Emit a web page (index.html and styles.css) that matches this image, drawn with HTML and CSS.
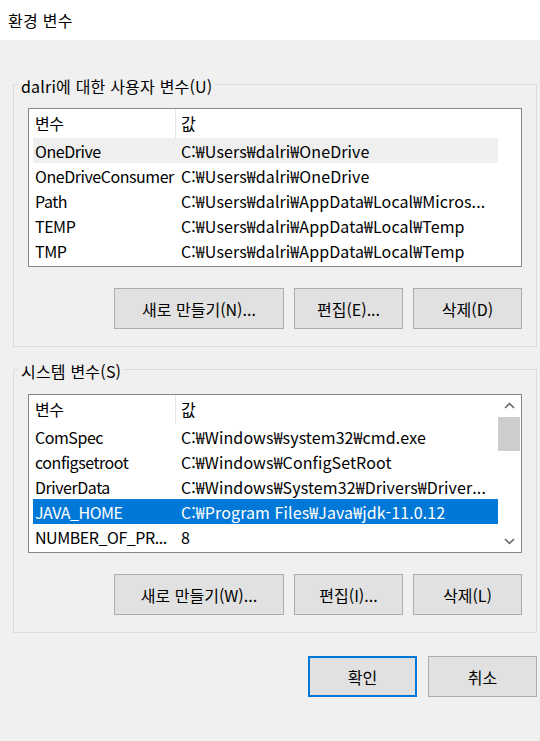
FILE: index.html
```html
<!DOCTYPE html>
<html lang="ko">
<head>
<meta charset="utf-8">
<title>환경 변수</title>
<link rel="stylesheet" href="styles.css">
</head>
<body>
<div class="window">
  <div class="titlebar">환경 변수</div>
  <div class="content">
    <fieldset class="group group-user">
      <legend>dalri에 대한 사용자 변수(U)</legend>
      <div class="group-body">
        <div class="list">
          <div class="list-main">
            <div class="row head"><span class="c1">변수</span><span class="c2">값</span></div>
            <div class="row hover"><span class="c1">OneDrive</span><span class="c2">C:₩Users₩dalri₩OneDrive</span></div>
            <div class="row"><span class="c1">OneDriveConsumer</span><span class="c2">C:₩Users₩dalri₩OneDrive</span></div>
            <div class="row"><span class="c1">Path</span><span class="c2">C:₩Users₩dalri₩AppData₩Local₩Micros...</span></div>
            <div class="row"><span class="c1">TEMP</span><span class="c2">C:₩Users₩dalri₩AppData₩Local₩Temp</span></div>
            <div class="row"><span class="c1">TMP</span><span class="c2">C:₩Users₩dalri₩AppData₩Local₩Temp</span></div>
          </div>
          <div class="list-spacer"></div>
        </div>
        <div class="buttons">
          <button class="btn btn-wide">새로 만들기(N)...</button>
          <button class="btn">편집(E)...</button>
          <button class="btn">삭제(D)</button>
        </div>
      </div>
    </fieldset>

    <fieldset class="group group-system">
      <legend>시스템 변수(S)</legend>
      <div class="group-body">
        <div class="list">
          <div class="list-main">
            <div class="row head"><span class="c1">변수</span><span class="c2">값</span></div>
            <div class="row"><span class="c1">ComSpec</span><span class="c2">C:₩Windows₩system32₩cmd.exe</span></div>
            <div class="row"><span class="c1">configsetroot</span><span class="c2">C:₩Windows₩ConfigSetRoot</span></div>
            <div class="row"><span class="c1">DriverData</span><span class="c2">C:₩Windows₩System32₩Drivers₩Driver...</span></div>
            <div class="row selected"><span class="c1">JAVA_HOME</span><span class="c2">C:₩Program Files₩Java₩jdk-11.0.12</span></div>
            <div class="row"><span class="c1">NUMBER_OF_PR...</span><span class="c2">8</span></div>
          </div>
          <div class="scrollbar">
            <div class="sb-arrow">
              <svg width="11" height="7" viewBox="0 0 11 7"><path d="M1 6 L5.5 1.5 L10 6" fill="none" stroke="#606060" stroke-width="1.5"/></svg>
            </div>
            <div class="sb-thumb"></div>
            <div class="sb-track"></div>
            <div class="sb-arrow">
              <svg width="11" height="7" viewBox="0 0 11 7"><path d="M1 1 L5.5 5.5 L10 1" fill="none" stroke="#606060" stroke-width="1.5"/></svg>
            </div>
          </div>
        </div>
        <div class="buttons">
          <button class="btn btn-wide">새로 만들기(W)...</button>
          <button class="btn">편집(I)...</button>
          <button class="btn">삭제(L)</button>
        </div>
      </div>
    </fieldset>

    <div class="dialog-buttons">
      <button class="btn btn-default">확인</button>
      <button class="btn">취소</button>
    </div>
  </div>
</div>
</body>
</html>
```

FILE: styles.css
```css
* {
  box-sizing: border-box;
}

html, body {
  margin: 0;
  padding: 0;
}

body {
  width: 540px;
  height: 741px;
  overflow: hidden;
  background: #f0f0f0;
  font-family: "Noto Sans CJK KR", "Noto Sans", sans-serif;
  font-size: 16px;
  color: #000;
}

.window {
  width: 540px;
  height: 741px;
}

.titlebar {
  height: 40px;
  background: #ffffff;
  display: flex;
  align-items: center;
  padding-left: 8px;
  font-size: 16px;
  letter-spacing: 0.3px;
}

.content {
  padding: 0 3px 0 13px;
}

.group {
  margin: 0;
  padding: 0;
  min-width: 0;
  border: 1px solid #dcdcdc;
}

.group-user {
  margin-top: 34px;
}

.group-system {
  margin-top: 12px;
}

.group legend {
  margin-left: 5px;
  padding: 4px 2px 0 2px;
  line-height: 16px;
  font-size: 16px;
  letter-spacing: 0.2px;
}

.group-body {
  padding: 14px 14px 17px 14px;
}

.group-system .group-body {
  padding-top: 15px;
}

.list {
  height: 159px;
  border: 1px solid #828790;
  background: #ffffff;
  display: flex;
}

.list-main {
  flex: 1;
  min-width: 0;
  padding-left: 4px;
}

.list-spacer {
  width: 23px;
}

.row {
  display: grid;
  grid-template-columns: 143px 1fr;
  height: 25px;
  line-height: 26px;
  white-space: nowrap;
}

.row.head {
  height: 29px;
  line-height: 29px;
}

.row.head .c1 {
  border-right: 1px solid #e5e5e5;
}

.c1 {
  padding-left: 2px;
  letter-spacing: -0.45px;
  overflow: hidden;
}

.c2 {
  padding-left: 5px;
  letter-spacing: 0.1px;
  overflow: hidden;
}

.row.hover {
  background: #efefef;
}

.row.selected {
  background: #0078d7;
  color: #ffffff;
}

.scrollbar {
  width: 23px;
  padding-right: 1px;
  display: flex;
  flex-direction: column;
  background: #ffffff;
}

.sb-arrow {
  height: 21px;
  display: flex;
  align-items: center;
  justify-content: center;
}

.sb-thumb {
  height: 34px;
  margin-top: 1px;
  background: #cdcdcd;
}

.sb-track {
  flex: 1;
}

.buttons {
  display: flex;
  justify-content: flex-end;
  gap: 10px;
  margin-top: 21px;
}

.btn {
  height: 41px;
  width: 109px;
  margin: 0;
  padding: 0;
  border: 1px solid #adadad;
  background: #e1e1e1;
  font-family: "Noto Sans CJK KR", "Noto Sans", sans-serif;
  font-size: 16px;
  color: #000;
}

.btn-wide {
  width: 170px;
}

.dialog-buttons {
  display: flex;
  justify-content: flex-end;
  gap: 11px;
  margin-top: 23px;
}

.btn-default {
  border: 2px solid #0078d7;
}
```
